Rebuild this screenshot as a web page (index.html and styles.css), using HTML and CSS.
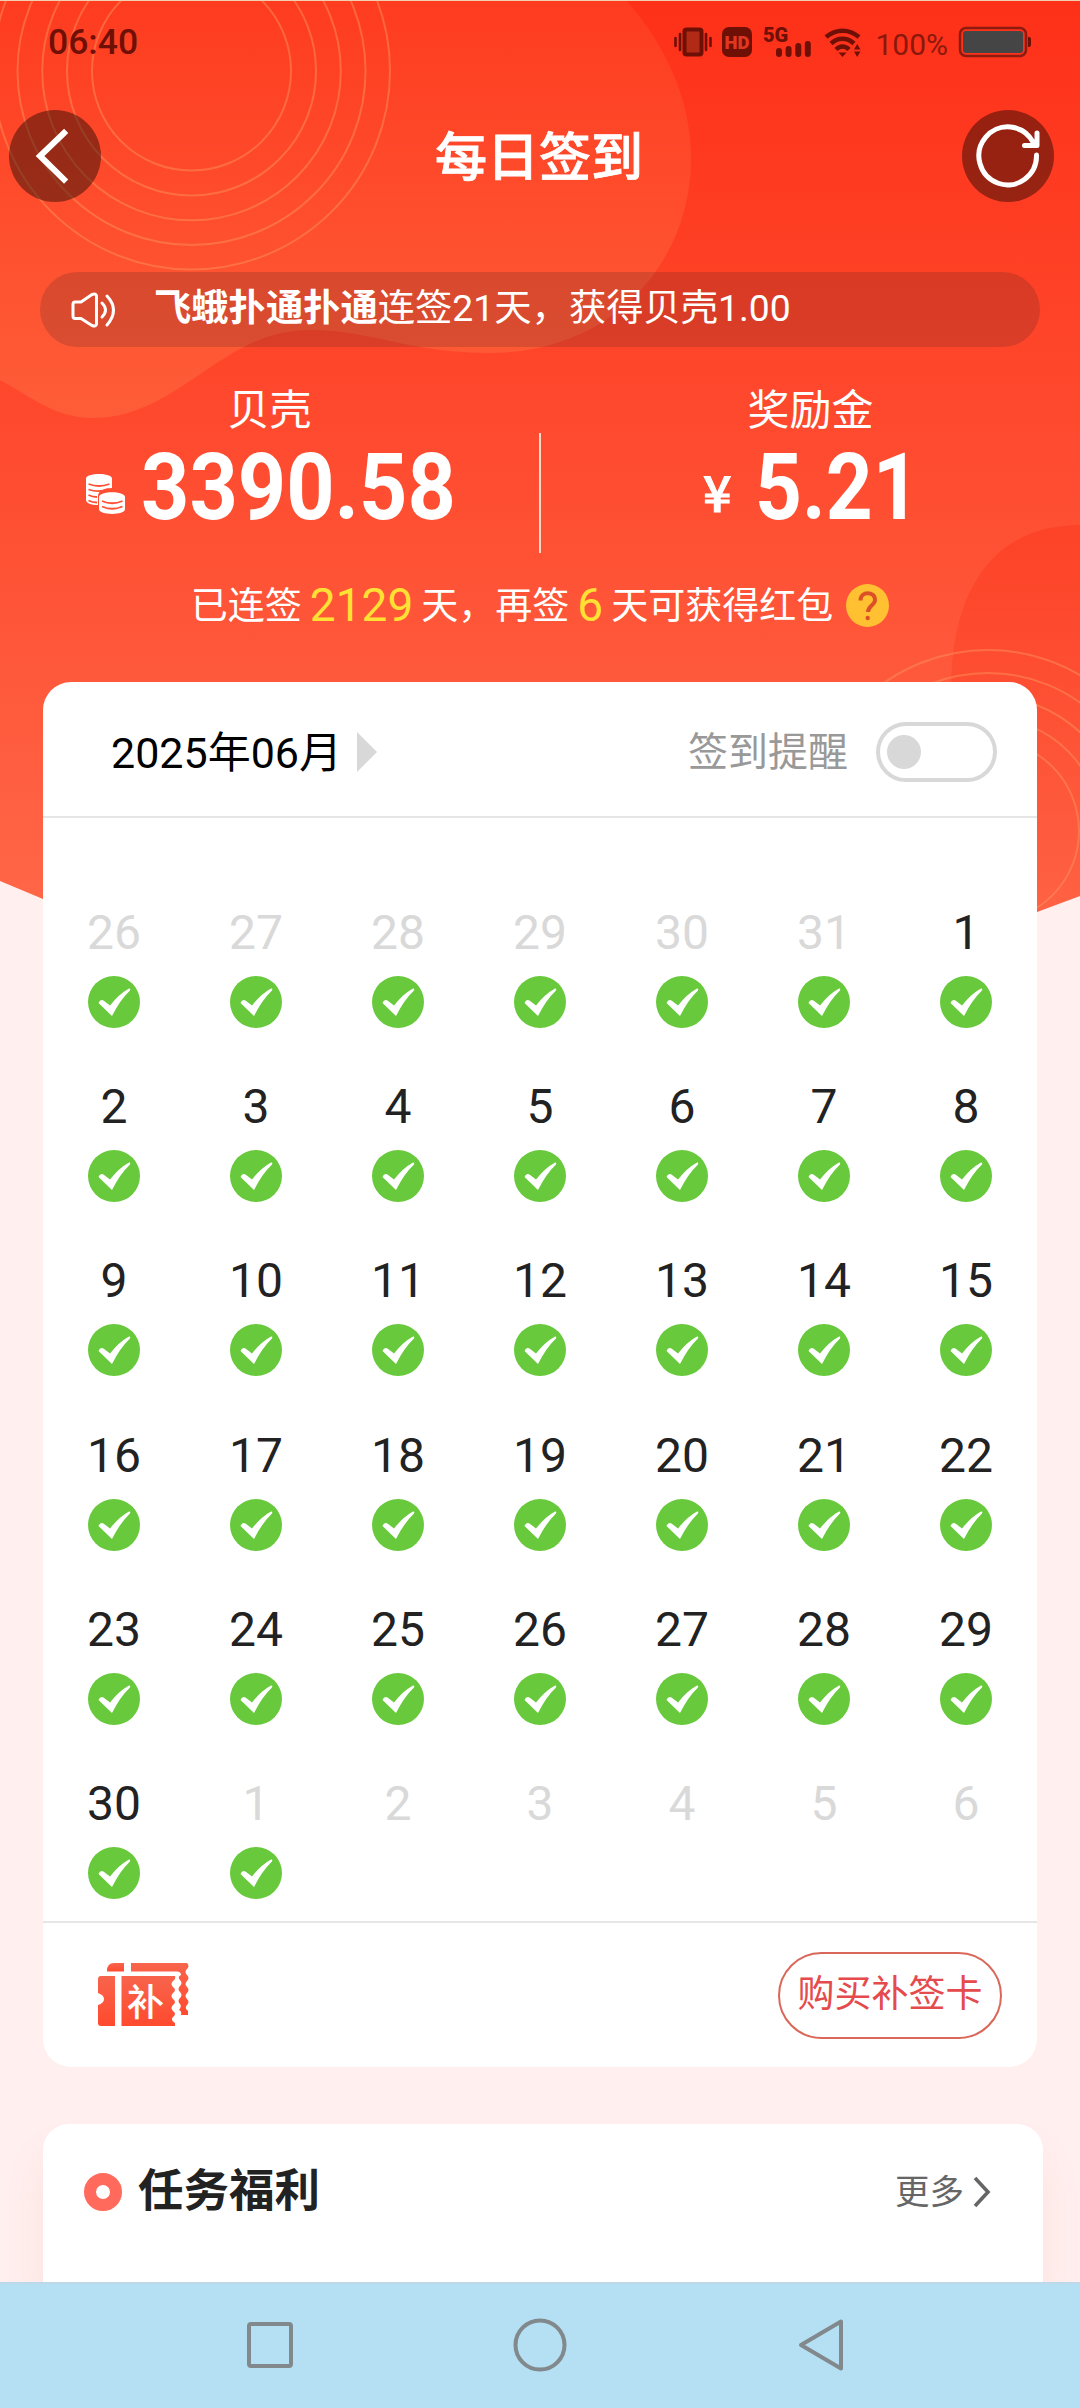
FILE: index.html
```
<!DOCTYPE html>
<html lang="zh-CN">
<head>
    <meta charset="UTF-8">
    <meta name="viewport" content="width=device-width, initial-scale=1.0">
    <title>每日签到</title>
    <link rel="stylesheet" href="styles.css">
</head>
<body>
    <svg class="hero-bg" width="1080" height="930" viewBox="0 0 1080 930">
        <defs>
            <linearGradient id="red" x1="0" y1="0" x2="0" y2="1">
                <stop offset="0" stop-color="#fe3018"/>
                <stop offset="1" stop-color="#ff6848"/>
            </linearGradient>
            <linearGradient id="light" x1="0" y1="0" x2="0" y2="1">
                <stop offset="0" stop-color="#ff7040" stop-opacity=".18"/>
                <stop offset="1" stop-color="#ff7848" stop-opacity=".42"/>
            </linearGradient>
            <linearGradient id="dark" x1="0" y1="0" x2="0" y2="1">
                <stop offset="0" stop-color="#fc3a20" stop-opacity=".6"/>
                <stop offset="1" stop-color="#fc4a30" stop-opacity=".15"/>
            </linearGradient>
            <clipPath id="hero"><path d="M0 0H1080V896L1037 912C860 978 220 974 43 899L0 881Z"/></clipPath>
        </defs>
        <g clip-path="url(#hero)">
            <rect width="1080" height="930" fill="url(#red)"/>
            <path d="M0 0H626C670 50 691 105 691 158C691 265 610 353 490 353C410 353 370 330 310 330C220 330 180 418 92 418C55 418 30 396 0 380Z" fill="url(#light)"/>
            <path d="M1080 525C1005 525 951 575 951 690V930H1080Z" fill="url(#dark)"/>
            <g class="rings">
                <circle cx="191.5" cy="71" r="99.5"/>
                <circle cx="191.5" cy="71" r="124.5"/>
                <circle cx="191.5" cy="71" r="149.3"/>
                <circle cx="191.5" cy="71" r="174"/>
                <circle cx="191.5" cy="71" r="198.5"/>
                <circle cx="988" cy="831" r="91"/>
                <circle cx="988" cy="831" r="113"/>
                <circle cx="988" cy="831" r="135"/>
                <circle cx="988" cy="831" r="158"/>
                <circle cx="988" cy="831" r="181"/>
            </g>
        </g>
    </svg>

    <div class="page">
        <div class="status">
            <span class="time">06:40</span>
            <svg class="status-icons" width="190" height="36" viewBox="672 24 190 36">
                <rect x="685.5" y="29.5" width="17" height="25" rx="2" fill="#b12a16" stroke="#6f1007" stroke-width="4"/>
                <path d="M676.5 38v8M681 34v16M707 34v16M711.5 38v8" stroke="#6f1007" stroke-width="2.6" stroke-linecap="round"/>
                <rect x="723" y="27" width="30" height="30" rx="7" fill="#6f1007"/>
                <text x="738" y="49" class="hd">HD</text>
                <text x="764" y="41.500" class="net">5G</text>
                <path d="M780 51v3M789.600 49v5M799.300 46v8M808.800 44v10" stroke="#6f1007" stroke-width="6" stroke-linecap="round"/>
                <g fill="none" stroke="#6f1007" stroke-width="4.500">
                    <path d="M827 37C837 28.500 850 28.500 860 37"/>
                    <path d="M832 43.500C839 37 848 37 855 43.500"/>
                    <path d="M837 49.500C841 45.500 846 45.500 850 49.500"/>
                </g>
                <path d="M839.500 52.500h8L843.500 57zM855 49.500h6.500L858.200 44zM855 51.500h6.500L858.200 57z" fill="#6f1007"/>
            </svg>
            <span class="percent">100%</span>
            <svg width="74" height="32" viewBox="958 26 74 32">
                <rect x="960" y="28" width="66" height="28" rx="6" fill="none" stroke="#8c1b10" stroke-width="2.500"/>
                <rect x="963" y="31" width="60" height="22" rx="3" fill="#454545"/>
                <path d="M1028 37h1a2 2 0 0 1 2 2v6a2 2 0 0 1-2 2h-1z" fill="#6f1007"/>
            </svg>
        </div>

        <div class="topbar">
            <button class="round">
                <svg width="92" height="92" viewBox="0 0 92 92"><path d="M55 23L31 46L55 69.500" fill="none" stroke="#fff" stroke-width="6" stroke-linecap="square"/></svg>
            </button>
            <h1>每日签到</h1>
            <button class="round">
                <svg width="92" height="92" viewBox="0 0 92 92"><path d="M74.500 45A28.800 29 0 1 1 71 32M75 23V35.500H62.500" fill="none" stroke="#fff" stroke-width="5" stroke-linecap="round" stroke-linejoin="round"/></svg>
            </button>
        </div>

        <div class="notice">
            <svg width="46" height="38" viewBox="0 0 46 38" fill="none" stroke="#fff" stroke-width="3" stroke-linejoin="round" stroke-linecap="round">
                <path d="M4 11H10L21 3.500Q25 2 25.500 5V33Q25 36 21 34.500L10 27.500H4Q2 27.500 2 25V13.500Q2 11 4 11Z"/>
                <path d="M31 12Q38 19 31 26M36 5Q49 19 36 34"/>
            </svg>
            <p><b>飞蛾扑通扑通</b>连签21天，获得贝壳1.00</p>
        </div>

        <div class="assets">
            <div class="asset">
                <span class="label">贝壳</span>
                <div class="value">
                    <svg width="40" height="42" viewBox="85 473 40 42">
                        <path d="M86 478.500C86 472.500 112 472.500 112 478.500V488C104 488 98 491 98 496V505C91 505 86 503 86 500Z" fill="#fff"/>
                        <path d="M99 497C99 490.500 125 490.500 125 497V509C125 515.500 99 515.500 99 509Z" fill="#fff"/>
                        <path d="M88.500 484Q99 488 109.500 484M88.500 489.500Q99 493 109 489M88.500 495Q92 497 97 497M88.500 500.500Q92 502.500 97 502.500M102 501Q112 505.500 122.500 501M102 506.500Q112 511 122.500 506.500" fill="none" stroke="#ff5034" stroke-width="1.800"/>
                    </svg>
                    <strong>3390.58</strong>
                </div>
            </div>
            <div class="divider"></div>
            <div class="asset">
                <span class="label">奖励金</span>
                <div class="value bonus"><span class="yen">¥</span><strong>5.21</strong></div>
            </div>
        </div>

        <div class="streak">
            <span>已连签</span><em>2129</em><span>天，再签</span><em>6</em><span>天可获得红包</span>
            <svg width="43" height="43" viewBox="0 0 43 43">
                <circle cx="21.500" cy="21.500" r="21.500" fill="#ffc132"/>
                <path d="M14.500 16.500C14.500 6.500 29 7 29 16C29 21 22 21.500 22 28" fill="none" stroke="#dc5028" stroke-width="4"/>
                <circle cx="21.700" cy="34" r="2.200" fill="#dc5028"/>
            </svg>
        </div>

        <div class="calendar">
            <div class="calendar-head">
                <span class="month">2025年06月</span>
                <i class="next"></i>
                <span class="remind">签到提醒</span>
                <div class="switch"><i></i></div>
            </div>
            <div class="days" id="days"></div>
            <div class="calendar-foot">
                <svg width="92" height="64" viewBox="0 0 92 64">
                    <defs>
                        <linearGradient id="ticket" x1="0" y1="0" x2="0" y2="1">
                            <stop offset="0" stop-color="#f8644c"/>
                            <stop offset="1" stop-color="#ff4a2e"/>
                        </linearGradient>
                    </defs>
                    <g fill="url(#ticket)">
                        <path d="M9 8Q9 0 16 0H26V8.500H9Z"/>
                        <path d="M33 0H89Q92 3 89 6Q86 9 89 12Q92 15 89 18Q86 21 89 24Q92 27 89 30Q86 33 89 36Q92 39 89 42Q86 45 90 48V52H83Q84 48 81 47Q84 43 82 41Q79 38 82 35Q85 32 82 29Q79 26 82 23Q85 20 82 17Q79 14 83 12Q83 8.500 79 8.500H33Z"/>
                        <path d="M3 13H17V63H3Q0 63 0 60V42Q6 40 6 36Q6 32 0 30V16Q0 13 3 13Z"/>
                        <path d="M23.500 13H77Q78 16 75 18Q72 21 75 24Q79 27 75 30Q72 33 75 36Q79 39 75 42Q72 45 75 48Q79 51 75 54Q72 57 77 60V63H23.500Z"/>
                    </g>
                    <text x="47.500" y="53" class="ticket-text">补</text>
                </svg>
                <button class="buy">购买补签卡</button>
            </div>
        </div>

        <div class="tasks">
            <i class="dot"></i>
            <h2>任务福利</h2>
            <span class="more">更多</span>
            <svg width="18" height="32" viewBox="0 0 18 32"><path d="M2 2L15 16L2 30" fill="none" stroke="#666" stroke-width="3.600"/></svg>
        </div>

        <div class="navbar">
            <svg width="54" height="54" viewBox="0 0 54 54"><rect x="6" y="6" width="42" height="42" rx="2"/></svg>
            <svg width="54" height="54" viewBox="0 0 54 54"><circle cx="27" cy="27" r="24.500"/></svg>
            <svg width="54" height="54" viewBox="0 0 54 54"><path d="M18 27L58 3.500V50.500Z"/></svg>
        </div>
    </div>

    <script>
        // 上月 26-31 日, 本月 1-30 日, 下月 1-6 日
        const cells = [];
        for (let d = 26; d <= 31; d++) cells.push({ d, other: true, done: true });
        for (let d = 1; d <= 30; d++) cells.push({ d, other: false, done: true });
        for (let d = 1; d <= 6; d++) cells.push({ d, other: true, done: d === 1 });

        const check = '<svg width="52" height="52" viewBox="0 0 52 52">' +
            '<circle cx="26" cy="26" r="26" fill="#67c93b"/>' +
            '<path d="M10.500 27Q12 23 15.500 24.500L22 29.500Q31 18 41 12.500Q43 12 42 14.500Q32 24 24 40Z" fill="#fff"/></svg>';

        document.getElementById("days").innerHTML = cells.map(c =>
            `<div class="day${c.other ? " other" : ""}"><span>${c.d}</span>${c.done ? check : ""}</div>`
        ).join("");
    </script>
</body>
</html>
```
FILE: styles.css
```
* {
    box-sizing: border-box;
}
body {
    margin: 0;
    width: 1080px;
    height: 2408px;
    overflow: hidden;
    background: #ffefee;
    font-family: Roboto, "Noto Sans CJK SC", sans-serif;
    color: #fff;
}
h1, h2, p {
    margin: 0;
}
i, em {
    font-style: normal;
}
svg {
    display: block;
    flex: none;
    overflow: visible;
}
button {
    padding: 0;
    border: none;
    background: none;
    font-family: inherit;
}
.hero-bg {
    position: absolute;
    top: 0;
    left: 0;
}
.rings circle {
    fill: none;
    stroke: #ff9a60;
    stroke-opacity: .45;
    stroke-width: 2;
}
.page {
    position: relative;
    display: flex;
    flex-direction: column;
    height: 2408px;
}

.status {
    display: flex;
    align-items: center;
    height: 82px;
    padding: 0 48px;
    border-top: 1px solid #f3cdb0;
    color: #6f1007;
}
.time {
    flex: 1;
    font-size: 35.5px;
    font-weight: 500;
}
.hd {
    font-size: 18.5px;
    font-weight: 900;
    fill: #e03820;
    text-anchor: middle;
}
.net {
    font-size: 20px;
    font-weight: 900;
    fill: #6f1007;
}
.percent {
    margin: 6px 10px 0 14px;
    font-size: 30px;
    font-weight: 400;
    color: #8a180c;
}

.topbar {
    display: flex;
    align-items: center;
    justify-content: space-between;
    height: 148px;
    padding: 0 26px 0 9px;
}
.topbar h1 {
    margin-left: 15px;
    padding-bottom: 5px;
    font-size: 52px;
    font-weight: 500;
    -webkit-text-stroke: .8px #fff;
}
.round {
    width: 92px;
    height: 92px;
    border-radius: 50%;
    background: rgba(20, 5, 0, .44);
}

.notice {
    display: flex;
    align-items: center;
    gap: 37px;
    height: 75px;
    margin: 42px 40px 0;
    padding-left: 31px;
    border-radius: 38px;
    background: rgba(60, 30, 30, .19);
    font-size: 37.3px;
}
.notice p {
    padding-bottom: 9px;
}

.assets {
    display: flex;
    height: 213px;
    padding-top: 37px;
}
.asset {
    flex: 1;
    text-align: center;
}
.label {
    display: block;
    line-height: 54px;
    font-size: 42px;
}
.value {
    display: flex;
    align-items: center;
    height: 99px;
    padding-left: 85px;
}
.value svg {
    margin: 12px 16px 0 0;
}
/* 数字字形收窄 */
.value strong {
    font-size: 92px;
    font-weight: 700;
    transform: scaleX(.917);
    transform-origin: left;
}
.bonus {
    padding-left: 162px;
}
.bonus strong {
    transform: scaleX(.89);
}
.yen {
    width: 52px;
    padding-top: 5px;
    font-family: "Noto Sans CJK SC", sans-serif;
    font-size: 50px;
    font-weight: 500;
    line-height: 60px;
    text-align: left;
    -webkit-text-stroke: 1px #fff;
}
.divider {
    width: 2px;
    height: 120px;
    margin-top: 49px;
    background: #f8dcc8;
}

.streak {
    display: flex;
    align-items: center;
    justify-content: center;
    height: 90px;
    font-size: 37px;
}
.streak span {
    padding-bottom: 4px;
}
.streak em {
    margin: 0 8px;
    font-size: 46px;
    color: #ffe034;
}
.streak svg {
    margin-left: 13px;
}

.calendar {
    width: 994px;
    height: 1385px;
    margin: 32px 0 0 43px;
    border-radius: 28px;
    background: #fff;
}
.calendar-head {
    display: flex;
    align-items: center;
    height: 136px;
    padding: 6px 40px 0 68px;
    border-bottom: 2px solid #e6e6e6;
}
.month {
    padding-bottom: 6px;
    font-size: 43px;
    color: #000;
}
.next {
    margin-left: 15px;
    border: 20px solid transparent;
    border-left-color: #d8d8d8;
    border-right: 0;
}
.remind {
    margin-left: auto;
    padding-bottom: 6px;
    font-size: 40px;
    color: #999;
}
.switch {
    width: 121px;
    height: 60px;
    margin-left: 28px;
    padding: 9px 7px;
    border: 4px solid #d8d8d8;
    border-radius: 30px;
}
.switch i {
    display: block;
    width: 34px;
    height: 34px;
    border-radius: 50%;
    background: #d8d8d8;
}
.days {
    display: grid;
    grid-template-columns: repeat(7, 142px);
    grid-auto-rows: 174.2px;
    height: 1103px;
    padding-top: 85px;
}
.day {
    display: flex;
    flex-direction: column;
    align-items: center;
    font-size: 48px;
    line-height: 60px;
    color: #222;
}
.day svg {
    margin-top: 13px;
}
.day.other {
    color: #d9d9d9;
}
.calendar-foot {
    display: flex;
    align-items: center;
    justify-content: space-between;
    height: 146px;
    padding: 0 35px 0 55px;
    border-top: 2px solid #e6e6e6;
}
.ticket-text {
    font-size: 37px;
    font-weight: 500;
    fill: #fff;
    text-anchor: middle;
}
.buy {
    width: 224px;
    height: 87px;
    border: 2px solid #d9685a;
    border-radius: 44px;
    font-size: 37px;
    line-height: 78px;
    color: #e54a4c;
}

.tasks {
    display: flex;
    align-items: center;
    height: 158px;
    margin: 57px 37px 0 43px;
    padding: 0 52px 22px 41px;
    border-radius: 26px 26px 0 0;
    background: #fff;
    box-shadow: 0 30px 40px rgba(230, 120, 130, .1);
}
.dot {
    width: 38px;
    height: 38px;
    border: 12px solid #ff6a5c;
    border-radius: 50%;
}
.tasks h2 {
    flex: 1;
    margin-left: 16px;
    padding-bottom: 11px;
    font-size: 45.5px;
    color: #222;
}
.more {
    margin-right: 9px;
    padding-bottom: 6px;
    font-size: 34.5px;
    color: #666;
}

.navbar {
    display: flex;
    align-items: center;
    gap: 216px;
    position: relative;
    height: 126px;
    padding: 0 0 2px 243px;
    border-top: 2px solid #bdd9e9;
    background: #b5dff3;
}
.navbar svg {
    fill: none;
    stroke: #82898d;
    stroke-width: 4;
    stroke-linejoin: round;
}
```
